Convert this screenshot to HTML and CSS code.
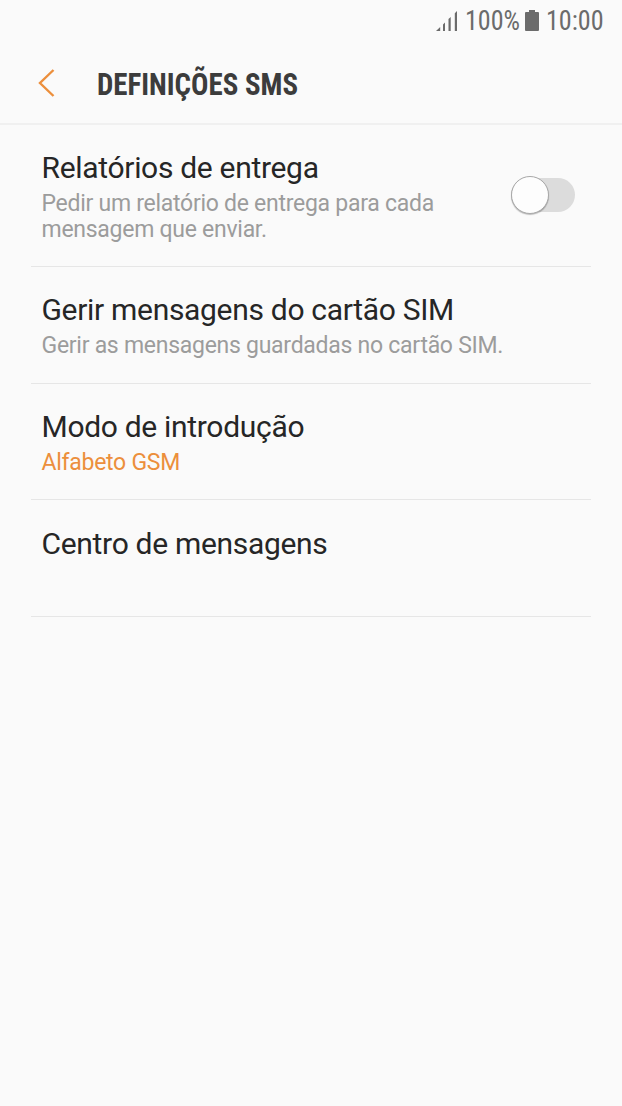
FILE: index.html
```
<!DOCTYPE html>
<html lang="pt">
<head>
<meta charset="utf-8">
<title>Definições SMS</title>
<link rel="stylesheet" href="styles.css">
</head>
<body>
<div class="status">
  <svg class="signal" width="22" height="22" viewBox="0 0 22 22"><path d="M0 21L4.2 17V21ZM7 21V14.5L9 12.5V21ZM12.5 21V9L14.7 7V21ZM18.8 21V3.2L21 1V21Z"/></svg>
  <svg class="percent" width="58" height="36"><text x="1" y="26" textLength="55" lengthAdjust="spacingAndGlyphs">100%</text></svg>
  <svg class="battery" width="14" height="21" viewBox="0 0 14 21"><path d="M4 0H10V2H13Q14 2 14 3V20Q14 21 13 21H1Q0 21 0 20V3Q0 2 1 2H4Z"/></svg>
  <svg class="clock" width="64" height="36"><text x="1" y="26" textLength="57.5" lengthAdjust="spacingAndGlyphs">10:00</text></svg>
</div>
<header class="header">
  <svg class="back" width="18" height="30" viewBox="0 0 18 30"><path d="M15.5 2L2 15L15.5 28"/></svg>
  <svg class="title" width="216" height="52"><text x="0" y="37" textLength="201" lengthAdjust="spacingAndGlyphs">DEFINIÇÕES SMS</text></svg>
</header>
<main class="list">
  <section class="item item-tall">
    <div class="copy">
      <div class="name">Relatórios de entrega</div>
      <div class="note">Pedir um relatório de entrega para cada<br>mensagem que enviar.</div>
    </div>
    <div class="switch"><div class="knob"></div></div>
  </section>
  <section class="item">
    <div class="copy">
      <div class="name">Gerir mensagens do cartão SIM</div>
      <div class="note">Gerir as mensagens guardadas no cartão SIM.</div>
    </div>
  </section>
  <section class="item">
    <div class="copy">
      <div class="name">Modo de introdução</div>
      <div class="note accent">Alfabeto GSM</div>
    </div>
  </section>
  <section class="item item-last">
    <div class="copy"><div class="name">Centro de mensagens</div></div>
  </section>
</main>
</body>
</html>
```
FILE: styles.css
```
* { box-sizing: border-box; }
body {
  margin: 0;
  min-height: 1106px;
  background: #fafafa;
  font-family: Roboto, sans-serif;
}
svg { display: block; flex: none; }
.status {
  display: flex;
  align-items: flex-start;
  height: 44px;
  padding: 4px 0 0 436px;
  fill: #6b6b6b;
  font: 400 27px "Roboto Condensed", Roboto, sans-serif;
}
.signal { margin-top: 6px; }
.percent { margin-left: 6px; }
.battery { margin: 6px 0 0 3px; }
.clock { margin-left: 6px; }
.header {
  display: flex;
  align-items: center;
  height: 81px;
  padding-left: 38px;
  border-bottom: 2px solid #f0f0f0;
}
.back { fill: none; stroke: #ec8f3c; stroke-width: 2.4; margin-top: -1px; }
.title {
  margin-left: 41px;
  fill: #3c3c3c;
  font: 700 31px "Roboto Condensed", Roboto, sans-serif;
}
.list { padding: 0 31px; }
.item {
  display: flex;
  justify-content: space-between;
  height: 116.7px;
  padding: 26px 16px 0 10.5px;
  border-bottom: 1px solid #e6e6e6;
}
.item-tall { height: 142px; }
.item-last { padding-top: 27px; }
.name {
  color: #262626;
  font-size: 30px;
  letter-spacing: -0.31px;
  line-height: 34px;
  white-space: nowrap;
}
.note {
  margin-top: 6px;
  color: #9c9c9c;
  font-size: 23px;
  letter-spacing: -0.27px;
  line-height: 26px;
  white-space: nowrap;
}
.accent { color: #ec8f3c; }
.switch {
  width: 64px;
  height: 34px;
  margin-top: 27px;
  border-radius: 17px;
  background: #dcdcdc;
}
.knob {
  width: 38px;
  height: 38px;
  margin-top: -2px;
  border: 1px solid #a8a8a8;
  border-radius: 50%;
  background: #fdfdfd;
  box-shadow: 0 1px 1px #00000040;
}
```
